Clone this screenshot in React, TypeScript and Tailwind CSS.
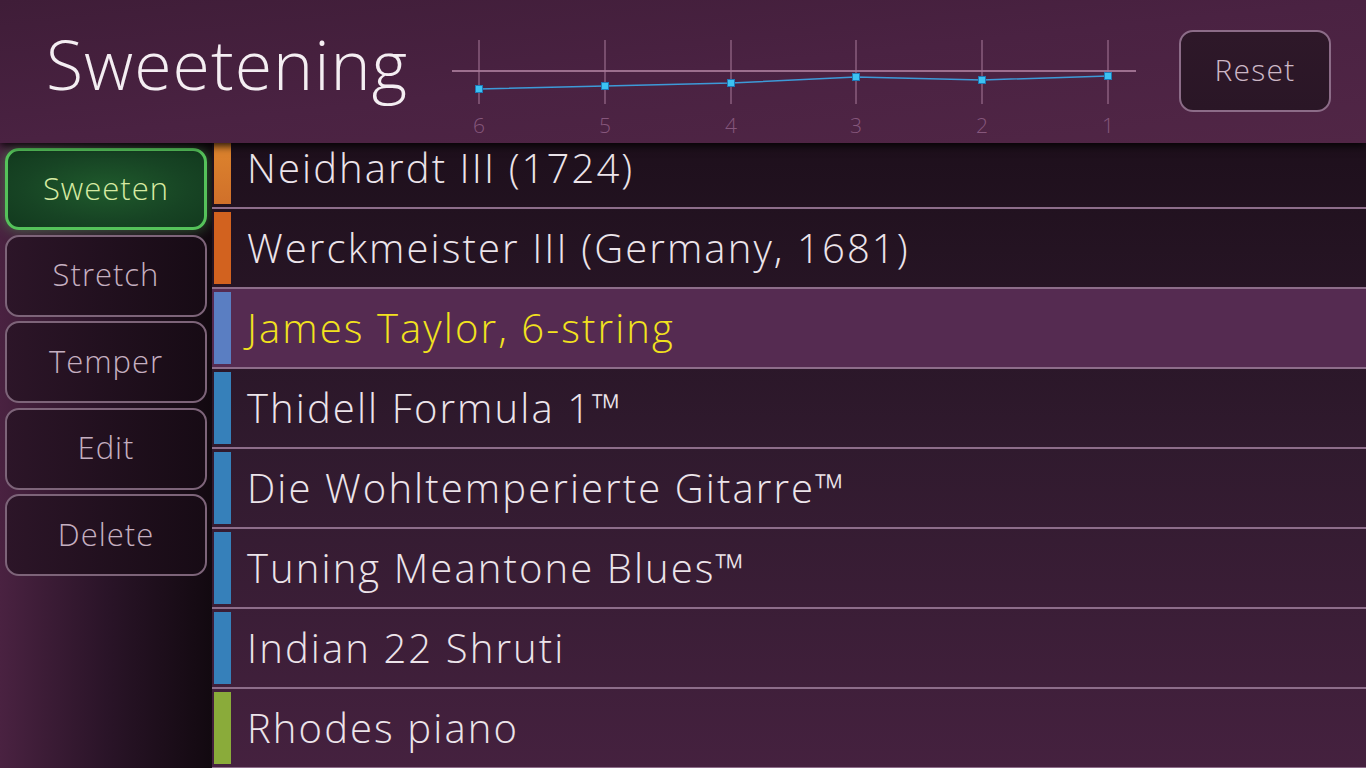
import React from "react";

const tunings = [
  { name: "Neidhardt III (1724)", color: "bg-gradient-to-b from-[#e0882e] to-[#d0702a]" },
  { name: "Werckmeister III (Germany, 1681)", color: "bg-[#d2621f]" },
  { name: "James Taylor, 6-string", color: "bg-[#5a7ec2]", selected: true },
  { name: "Thidell Formula 1™", color: "bg-[#3680ba]" },
  { name: "Die Wohltemperierte Gitarre™", color: "bg-[#3680ba]" },
  { name: "Tuning Meantone Blues™", color: "bg-[#3680ba]" },
  { name: "Indian 22 Shruti", color: "bg-[#3680ba]" },
  { name: "Rhodes piano", color: "bg-[#8aab3a]" },
];

const actions = ["Sweeten", "Stretch", "Temper", "Edit", "Delete"];

// string numbers and their offsets (cents-ish) for the curve
const strings = [
  { label: "6", x: 29, y: 54 },
  { label: "5", x: 155, y: 51 },
  { label: "4", x: 281, y: 48 },
  { label: "3", x: 406, y: 42 },
  { label: "2", x: 532, y: 45 },
  { label: "1", x: 658, y: 41 },
];

function Curve() {
  const points = strings.map((s) => `${s.x},${s.y}`).join(" ");
  return (
    <svg width="690" height="105" viewBox="0 0 690 105" className="shrink-0">
      <line x1="2" y1="36" x2="686" y2="36" stroke="#b88aa8" strokeWidth="1.5" />
      {strings.map((s) => (
        <line key={s.label} x1={s.x} y1="5" x2={s.x} y2="69" stroke="#a87a9a" strokeWidth="1" />
      ))}
      <polyline points={points} fill="none" stroke="#3d9ad8" strokeWidth="1.5" />
      {strings.map((s) => (
        <rect
          key={"p" + s.label}
          x={s.x - 3.5}
          y={s.y - 3.5}
          width="7"
          height="7"
          fill="#3cc2f2"
          stroke="#1e7ab8"
          strokeWidth="1"
        />
      ))}
      {strings.map((s) => (
        <text
          key={"t" + s.label}
          x={s.x}
          y="98"
          textAnchor="middle"
          fontSize="21"
          fontWeight="300"
          fill="#86577c"
          fontFamily="'Open Sans', sans-serif"
        >
          {s.label}
        </text>
      ))}
    </svg>
  );
}

export default function App() {
  return (
    <div
      className="w-[1366px] h-[768px] overflow-hidden flex flex-col bg-gradient-to-br from-[#2a1627] via-[#3a1d35] to-[#4a2443]"
      style={{ fontFamily: "'Open Sans', 'Noto Sans', sans-serif" }}
    >
      {/* Header */}
      <header className="relative z-10 h-[143px] shrink-0 flex items-start bg-gradient-to-br from-[#3f1d38] via-[#4a2242] to-[#512646] shadow-[0_3px_8px_rgba(0,0,0,0.85)]">
        <div className="w-[450px] shrink-0 pl-[46px] pt-[24px]">
          <h1 className="text-[68px] leading-[80px] font-light text-[#f4eef2] tracking-[1px]">Sweetening</h1>
        </div>
        <div className="mt-[35px]">
          <Curve />
        </div>
        <button className="ml-[39px] mt-[30px] w-[152px] h-[82px] rounded-[14px] border-2 border-[#8c6c88] bg-gradient-to-b from-[#2e1829] to-[#2a1626] pb-[3px] text-[30px] font-light tracking-[1.2px] text-[#cdb7c6]">
          Reset
        </button>
      </header>

      <div className="flex flex-1 min-h-0">
        {/* Sidebar */}
        <aside className="w-[212px] shrink-0 flex flex-col gap-[4.5px] px-[5px] pt-[5px] bg-gradient-to-r from-[#4a2241] via-[#2a1428] to-[#120910]">
          {actions.map((a, i) =>
            i === 0 ? (
              <button
                key={a}
                className="h-[82px] rounded-[14px] border-[3px] border-[#55c25a] bg-[radial-gradient(ellipse_at_center,#1f5a2c_0%,#174424_60%,#123a1e_100%)] shadow-[0_0_14px_rgba(80,200,90,0.45)] pb-[2px] text-[31px] font-light tracking-[1px] text-[#d6eaa2]"
              >
                {a}
              </button>
            ) : (
              <button
                key={a}
                className="h-[82px] rounded-[14px] border-2 border-[#7d6479] bg-gradient-to-r from-[#2c1528] to-[#170b15] pb-[2px] text-[31px] font-light tracking-[1px] text-[#c5afc0]"
              >
                {a}
              </button>
            )
          )}
        </aside>

        {/* Tuning list */}
        <div className="flex-1 -mt-[14px] flex flex-col bg-gradient-to-b from-[#1d0f1b] via-[#301a2e] to-[#45213f]">
          {tunings.map((t) => (
            <div
              key={t.name}
              className={
                "h-[80px] shrink-0 flex items-stretch border-b-2 border-[#8d6d8a] " +
                (t.selected ? "bg-[#552b51]" : "bg-transparent")
              }
            >
              <div className="pl-[2px] py-[3px] flex">
                <div className={"w-[17px] " + t.color} />
              </div>
              <div
                className={
                  "pl-[16px] flex items-center text-[40px] font-[350] tracking-[2.1px] leading-none " +
                  (t.selected ? "text-[#f2e21e]" : "text-[#ece4ea]")
                }
              >
                {t.name}
              </div>
            </div>
          ))}
        </div>
      </div>
    </div>
  );
}
